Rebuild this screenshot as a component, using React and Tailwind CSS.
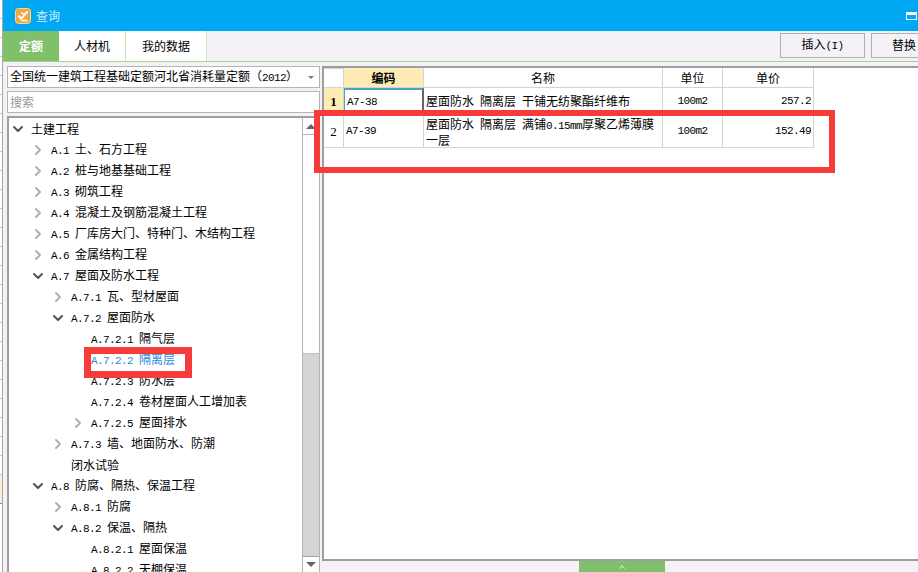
import { ChevronDown, ChevronRight } from "lucide-react";

// latin glyphs are half the width of the chinese ones in the original bitmap font
function Mixed({ text }) {
  const parts = text.match(/[\x20-\x7e]+|[^\x20-\x7e]+/g) || [];
  return parts.map((p, i) =>
    /^[\x20-\x7e]/.test(p) ? (
      <span key={i} className="font-['Liberation_Mono',monospace] text-[11px] tracking-[-0.6px] whitespace-pre">{p}</span>
    ) : (
      <span key={i} className="text-[12px]">{p}</span>
    )
  );
}

const tree = [
  { d: 0, o: "down", t: "土建工程" },
  { d: 1, o: "right", t: "A.1 土、石方工程" },
  { d: 1, o: "right", t: "A.2 桩与地基基础工程" },
  { d: 1, o: "right", t: "A.3 砌筑工程" },
  { d: 1, o: "right", t: "A.4 混凝土及钢筋混凝土工程" },
  { d: 1, o: "right", t: "A.5 厂库房大门、特种门、木结构工程" },
  { d: 1, o: "right", t: "A.6 金属结构工程" },
  { d: 1, o: "down", t: "A.7 屋面及防水工程" },
  { d: 2, o: "right", t: "A.7.1 瓦、型材屋面" },
  { d: 2, o: "down", t: "A.7.2 屋面防水" },
  { d: 3, t: "A.7.2.1 隔气层" },
  { d: 3, t: "A.7.2.2 隔离层", active: true },
  { d: 3, t: "A.7.2.3 防水层" },
  { d: 3, t: "A.7.2.4 卷材屋面人工增加表" },
  { d: 3, o: "right", t: "A.7.2.5 屋面排水" },
  { d: 2, o: "right", t: "A.7.3 墙、地面防水、防潮" },
  { d: 2, t: "闭水试验" },
  { d: 1, o: "down", t: "A.8 防腐、隔热、保温工程" },
  { d: 2, o: "right", t: "A.8.1 防腐" },
  { d: 2, o: "down", t: "A.8.2 保温、隔热" },
  { d: 3, t: "A.8.2.1 屋面保温" },
  { d: 3, t: "A.8.2.2 天棚保温" },
];

const indent = ["pl-[1px]", "pl-[21px]", "pl-[41px]", "pl-[61px]"];

function TreeRow({ row }) {
  return (
    <div className={`flex h-[21px] shrink-0 items-center ${indent[row.d]}`}>
      <span className="flex w-[21px] shrink-0 items-center">
        {row.o === "down" && <ChevronDown size={16} strokeWidth={3} className="text-[#555]" />}
        {row.o === "right" && <ChevronRight size={16} strokeWidth={3} className="text-[#b0b0b0]" />}
      </span>
      <span className={row.active ? "whitespace-nowrap text-[#2b88d8]" : "whitespace-nowrap text-black"}>
        <Mixed text={row.t} />
      </span>
    </div>
  );
}

const cols = ["w-[20px]", "w-[80px]", "w-[239px]", "w-[60px]", "w-[91px]"];

function Cell({ w, className = "", children }) {
  return (
    <div className={`flex shrink-0 items-center border-r border-b border-[#d4d4d4] ${w} ${className}`}>
      {children}
    </div>
  );
}

function Row({ no, bold, code, name, unit, price, h, selected }) {
  return (
    <div className={`flex ${h}`}>
      <Cell w={cols[0]} className={`justify-center ${bold ? "bg-[#fdedb5] font-bold" : "bg-white"}`}>
        <span className="font-['Liberation_Serif',serif] text-[13px]">{no}</span>
      </Cell>
      <Cell w={cols[1]} className={`pl-[2px] ${selected ? "border-t-2 border-r-2 border-l border-t-[#4aa3c0] border-l-[#4aa3c0] border-r-[#666]" : ""}`}>
        <Mixed text={code} />
      </Cell>
      <Cell w={cols[2]} className="pl-[2px] leading-[14px]">
        <span><Mixed text={name} /></span>
      </Cell>
      <Cell w={cols[3]} className="justify-center">
        <Mixed text={unit} />
      </Cell>
      <Cell w={cols[4]} className="justify-end pr-[2px]">
        <Mixed text={price} />
      </Cell>
    </div>
  );
}

// edge of the spreadsheet showing behind the dialog
const ticks = Array.from({ length: 25 }, (_, i) => i);

export default function App() {
  return (
    <div className="relative flex h-[572px] w-[918px] overflow-hidden bg-white text-[12px] text-black font-['Noto_Sans_CJK_SC',sans-serif]">
      <div className="flex w-[3px] shrink-0 flex-col border-r border-[#a8a8a8] bg-white">
        {ticks.map((i) => (
          <div key={i} className="h-[19px] shrink-0 border-b border-[#c8c8c8]" />
        ))}
        <div className="h-[28px] shrink-0 bg-[#f6eed2]" />
        <div className="h-[1px] shrink-0 bg-[#4aa3e0]" />
      </div>

      <div className="flex min-w-0 flex-1 flex-col bg-[#f4f2f6]">
        {/* title bar */}
        <div className="flex h-[31px] shrink-0 items-center bg-[#00a8f3] pl-[12px] pr-[1px]">
          <svg width="16" height="16" viewBox="0 0 16 16" className="shrink-0">
            <rect x="0.5" y="0.5" width="15" height="15" rx="3" fill="#eeaa3c" stroke="#f7d9a0" />
            <path d="M3.5 7.5l2.5 3.5 6.5-7.5" fill="none" stroke="#fff" strokeWidth="2" />
            <path d="M6 4.5l3 2M6.5 12.5h6" fill="none" stroke="#fff" strokeWidth="1.3" />
          </svg>
          <span className="ml-[5px] text-[12px] text-[#cdeefc]">查询</span>
          <div className="ml-auto h-[8px] w-[11px] border border-t-[3px] border-white" />
        </div>

        {/* tabs and buttons */}
        <div className="flex h-[31px] shrink-0 items-stretch border-b border-[#a6d18f]">
          <div className="flex w-[56px] items-center justify-center bg-[#80c06a] text-[12px] font-bold text-white">定额</div>
          <div className="flex w-[67px] items-center justify-center border-r border-[#c5e4b8] bg-white">人材机</div>
          <div className="flex w-[81px] items-center justify-center border-r border-[#c5e4b8] bg-white">我的数据</div>
          <div className="ml-auto flex items-center gap-[6px] pb-[2px]">
            <button className="h-[25px] w-[85px] border border-[#b0b0b0] text-[12px]">
              <Mixed text="插入(I)" />
            </button>
            <button className="h-[25px] w-[47px] border border-r-0 border-[#b0b0b0] pl-[20px] text-left text-[12px] whitespace-nowrap">替换</button>
          </div>
        </div>

        <div className="flex min-h-0 flex-1 pl-[4px] pt-[4px]">
          {/* left column */}
          <div className="flex w-[313px] shrink-0 flex-col gap-[3px]">
            <div className="flex h-[22px] shrink-0 items-center border border-[#b4b4b4] bg-white pl-[2px]">
              <span className="whitespace-nowrap"><Mixed text="全国统一建筑工程基础定额河北省消耗量定额（2012）" /></span>
              <span className="ml-auto mr-[5px] h-0 w-0 border-x-[3px] border-t-[3px] border-x-transparent border-t-[#777]" />
            </div>
            <div className="flex h-[22px] shrink-0 items-center border border-[#b4b4b4] bg-white pl-[2px] text-[#999]">搜索</div>

            <div className="flex min-h-0 flex-1 border-y-2 border-l-2 border-r border-b-0 border-y-[#a09ca2] border-l-[#a09ca2] border-r-[#b4b4b4] bg-white">
              <div className="flex min-w-0 flex-1 flex-col overflow-hidden">
                {tree.map((row) => (
                  <TreeRow key={row.t} row={row} />
                ))}
              </div>
              {/* scrollbar */}
              <div className="flex w-[17px] shrink-0 flex-col border-l border-[#b4b4b4] bg-[#d4d4d4]">
                <div className="flex h-[17px] shrink-0 items-center justify-center border-b border-[#b4b4b4] bg-white">
                  <span className="h-0 w-0 border-x-[5px] border-b-[5px] border-x-transparent border-b-[#666]" />
                </div>
                <div className="h-[219px] shrink-0 border-b border-[#c0c0c0] bg-white" />
                <div className="mt-auto flex h-[16px] shrink-0 items-center justify-center border-t border-[#a09ca2] bg-white">
                  <span className="h-0 w-0 border-x-[5px] border-t-[5px] border-x-transparent border-t-[#666]" />
                </div>
              </div>
            </div>
          </div>

          {/* right column */}
          <div className="ml-[2px] flex min-w-0 flex-1 flex-col">
            <div className="h-[501px] border-t-2 border-l-2 border-b-2 border-[#a09ca2] bg-white">
              <div className="flex h-[20px] text-center">
                <Cell w={cols[0]} className="border-t border-t-[#d4d4d4] bg-white" />
                <Cell w={cols[1]} className="justify-center bg-[#fdedb5] font-bold">编码</Cell>
                <Cell w={cols[2]} className="justify-center">名称</Cell>
                <Cell w={cols[3]} className="justify-center">单位</Cell>
                <Cell w={cols[4]} className="justify-center">单价</Cell>
              </div>
              <Row no="1" bold selected code="A7-38" name="屋面防水 隔离层 干铺无纺聚酯纤维布" unit="100m2" price="257.2" h="h-[28px]" />
              <Row no="2" code="A7-39" name="屋面防水 隔离层 满铺0.15mm厚聚乙烯薄膜一层" unit="100m2" price="152.49" h="h-[32px]" />
            </div>
            <div className="flex flex-1 pl-[257px]">
              <div className="flex h-full w-[86px] justify-center bg-[#80c06a] pt-[1px]">
                <ChevronDown size={10} className="rotate-180 text-white" />
              </div>
            </div>
          </div>
        </div>
      </div>

      {/* red annotation boxes */}
      <div className="absolute left-[314px] top-[110px] h-[63px] w-[521px] border-[6px] border-[#f63b3b]" />
      <div className="absolute left-[84px] top-[347px] h-[31px] w-[108px] border-[7px] border-[#f63b3b]" />
    </div>
  );
}
